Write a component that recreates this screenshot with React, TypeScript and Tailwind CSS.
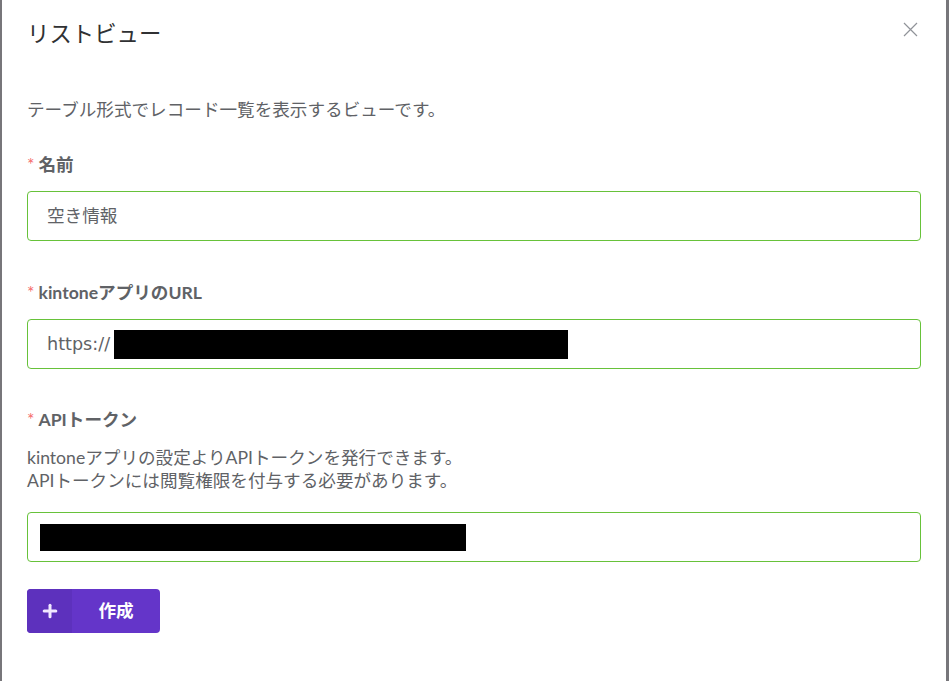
import { Plus } from "lucide-react";

const font = { fontFamily: 'Lato, "Noto Sans CJK JP", sans-serif' };

function Label({ text }: { text: string }) {
  return (
    <div className="h-6 leading-6 text-[17.6px] font-bold text-[#606266]">
      <span className="text-[#f56c6c] mr-1 font-normal">*</span>
      {text}
    </div>
  );
}

export default function App() {
  return (
    <div className="flex w-full h-[681px] bg-[#77767a]" style={font}>
      <div className="ml-[2px] w-[944px] h-full bg-white">
        <div className="flex items-start justify-between px-[25px] pt-[20px] h-[98px]">
          <h1 className="text-[22.4px] leading-7 font-normal text-[#303133]">リストビュー</h1>
          <button className="mt-[2px] mr-[3px]">
            <svg width="15" height="15" viewBox="0 0 15 15" stroke="#909399" strokeWidth="1.2" fill="none">
              <path d="M1 1L14 14M14 1L1 14" />
            </svg>
          </button>
        </div>
        <div className="px-[25px]">
          <p className="h-6 leading-6 text-[17.6px] text-[#606266]">
            テーブル形式でレコード一覧を表示するビューです。
          </p>

          <div className="mt-[31px]">
            <Label text="名前" />
            <div className="mt-[14px] h-[50px] flex items-center pl-[19px] border border-[#67c23a] rounded-[4px] text-[17.6px] text-[#606266]">
              空き情報
            </div>
          </div>

          <div className="mt-[40px]">
            <Label text="kintoneアプリのURL" />
            <div className="mt-[14px] h-[50px] flex items-center pl-[19px] border border-[#67c23a] rounded-[4px] text-[17.6px] text-[#606266]">
              <span className="font-['DejaVu_Sans']">https://</span>
              <span className="inline-block w-[454px] h-[29px] bg-black ml-[4px]" />
            </div>
          </div>

          <div className="mt-[39px]">
            <Label text="APIトークン" />
            <div className="mt-[14px] text-[17.6px] leading-[23px] text-[#606266]">
              <p>kintoneアプリの設定よりAPIトークンを発行できます。</p>
              <p>APIトークンには閲覧権限を付与する必要があります。</p>
            </div>
            <div className="mt-[20px] h-[50px] flex items-center pl-[12px] border border-[#67c23a] rounded-[4px]">
              <span className="inline-block w-[426px] h-[27px] bg-black" />
            </div>
          </div>

          <button className="mt-[27px] flex h-[44px] w-[133px] rounded-[4px] overflow-hidden bg-[#6435c9] text-white">
            <span className="flex items-center justify-center w-[45px] h-full bg-[#5d31bd]">
              <Plus size={20} strokeWidth={3.6} className="text-[#f0e8ff]" />
            </span>
            <span className="flex-1 flex items-center justify-center text-[17.6px] font-bold">作成</span>
          </button>
        </div>
      </div>
    </div>
  );
}
